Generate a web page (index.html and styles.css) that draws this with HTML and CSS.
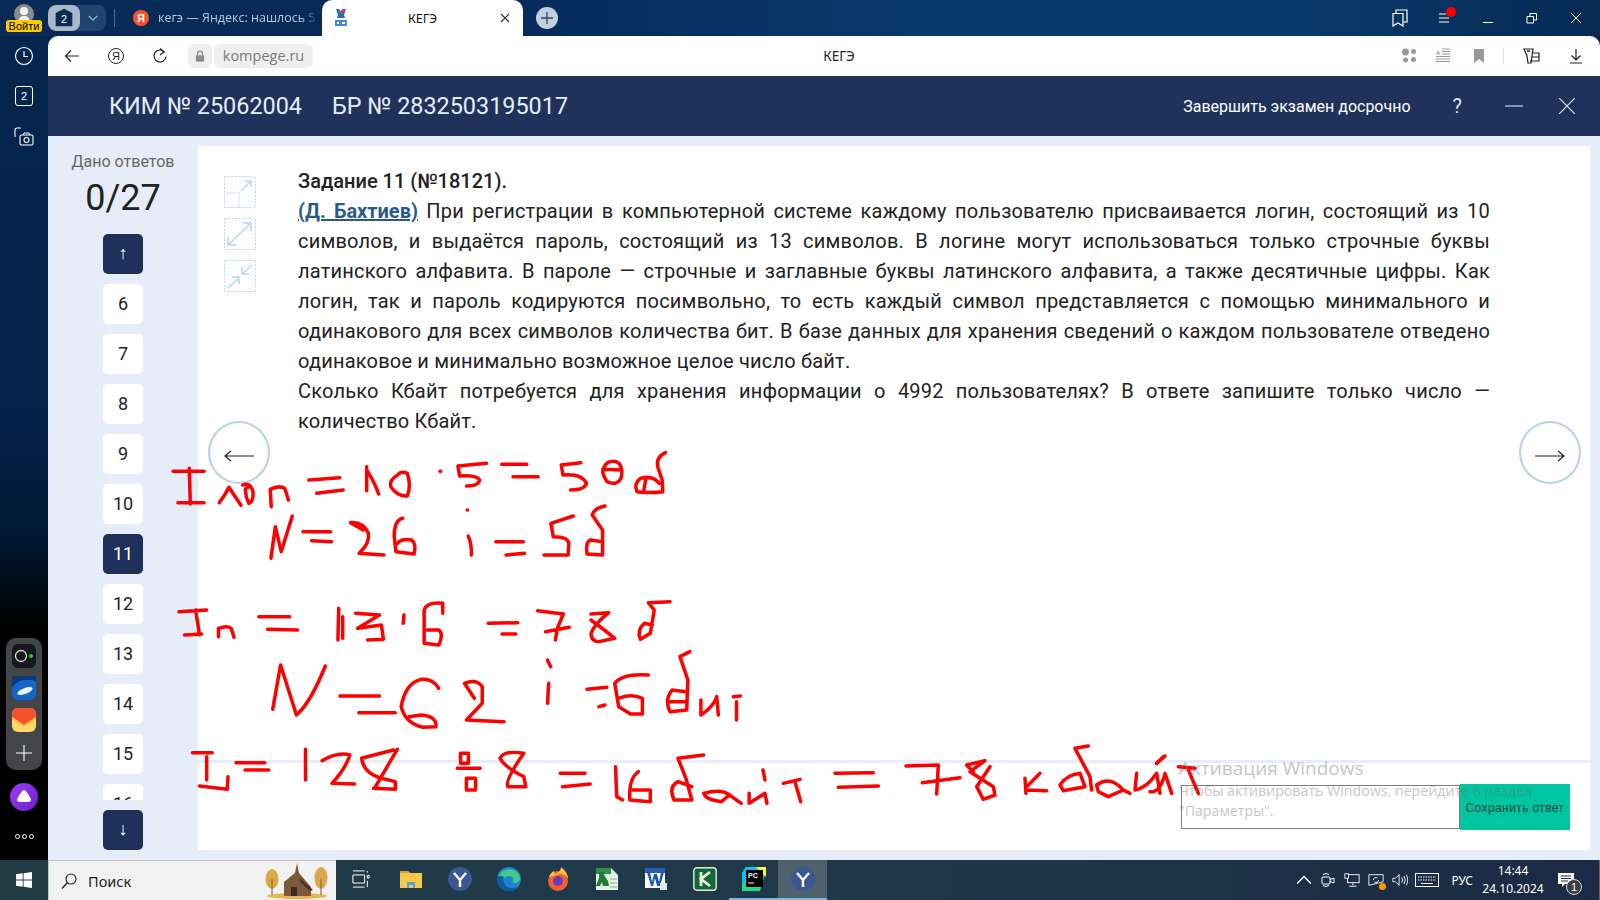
FILE: index.html
```html
<!DOCTYPE html>
<html lang="ru">
<head>
<meta charset="utf-8">
<title>КЕГЭ</title>
<link rel="stylesheet" href="styles.css">
</head>
<body>
<div class="window">
  <header class="tabbar">
    <div class="user">
      <svg class="avatar" viewBox="0 0 20 20"><circle cx="10" cy="10" r="10" fill="#8b8b8b"/><circle cx="10" cy="7" r="4" fill="#f2f2f2"/><path d="M4 18c1-5 3-6 6-6s5 1 6 6z" fill="#f2f2f2"/></svg>
      <span class="login">Войти</span>
    </div>
    <div class="tabgroup">
      <span class="tabgroup-count"><svg viewBox="0 0 24 24" class="house"><path d="M12 1 22 6v16H2V6z" fill="#0b2c55"/><text x="12" y="18" text-anchor="middle" class="house-num">2</text></svg></span>
      <span class="tabgroup-more"><svg viewBox="0 0 12 8" class="chev"><path d="M1 1l5 5 5-5" fill="none" stroke="#9db0c4" stroke-width="1.6"/></svg></span>
    </div>
    <span class="tab-sep"></span>
    <div class="tab">
      <span class="ya-fav">Я</span>
      <span class="tab-title">кегэ — Яндекс: нашлось 5</span>
    </div>
    <div class="tab-active">
      <svg class="fav" viewBox="0 0 14 20"><path d="M2 2h3l2 3 2-3h3l-2 6 1 3H3l1-3z" fill="#2a6fb5"/><path d="M7 3l3-1 1 3-3 2z" fill="#d8383a"/><path d="M1 13h12v6H1z" fill="#3f8ed0"/><path d="M3 15h2v2H3zM8 15h3v2H8z" fill="#fff"/></svg>
      <span class="active-title">КЕГЭ</span>
      <svg class="tab-x" viewBox="0 0 10 10"><path d="M1 1l8 8M9 1l-8 8" stroke="#333" stroke-width="1.1"/></svg>
    </div>
    <span class="newtab"><svg viewBox="0 0 12 12"><path d="M6 0v12M0 6h12" stroke="#33475f" stroke-width="1.3"/></svg></span>
    <div class="winctl">
      <svg class="wi" viewBox="0 0 16 18"><path d="M1 4.500h10v12.500l-5-3-5 3zM4 4.500V1h11v12h-4" fill="none" stroke="#fff" stroke-width="1.200"/></svg>
      <span class="menu-ic"><svg viewBox="0 0 12 12"><path d="M1 2h7M1 6h10M1 10h10" stroke="#fff" stroke-width="1"/></svg><i class="red-dot"></i></span>
      <svg class="wi" viewBox="0 0 12 12"><path d="M1 10.500h10" stroke="#fff"/></svg>
      <svg class="wi" viewBox="0 0 12 12"><path d="M1 4.500h6.500v6.500H1zM4 4.500V1.500h6.500V8H7.500" fill="none" stroke="#fff"/></svg>
      <svg class="wi" viewBox="0 0 12 12"><path d="M1 1l10 10M11 1 1 11" stroke="#fff"/></svg>
    </div>
  </header>

  <aside class="rail">
    <div class="rail-top">
      <svg class="rail-ic" viewBox="0 0 20 20"><circle cx="10" cy="10" r="8.500" fill="none" stroke="#fff" stroke-width="1.200"/><path d="M10 5v5.500h4" fill="none" stroke="#fff" stroke-width="1.200"/></svg>
      <span class="rail-tabs">2</span>
      <svg class="rail-ic" viewBox="0 0 20 20"><path d="M7 2H3a2 2 0 0 0-2 2v7" fill="none" stroke="#fff" stroke-width="1.100"/><rect x="6" y="9" width="13" height="10" rx="1.500" fill="none" stroke="#fff" stroke-width="1.100"/><circle cx="12.500" cy="14" r="2.500" fill="none" stroke="#fff" stroke-width="1.100"/><path d="M9 9l1-2h5l1 2" fill="none" stroke="#fff"/></svg>
    </div>
    <div class="rail-widgets">
      <svg class="app" viewBox="0 0 24 24"><rect width="24" height="24" rx="6" fill="#14191c"/><circle cx="9" cy="12" r="5.500" fill="none" stroke="#ddd" stroke-width="1.300"/><circle cx="19" cy="12" r="2" fill="#22d422"/></svg>
      <svg class="app" viewBox="0 0 24 24"><rect width="24" height="24" rx="6" fill="#1565c8"/><path d="M0 12C4 4 14 2 24 5V0H0z" fill="#0b3a78"/><ellipse cx="13" cy="15" rx="8" ry="3" fill="#eaf4ff" transform="rotate(-20 13 15)"/></svg>
      <svg class="app" viewBox="0 0 24 24"><rect width="24" height="24" rx="6" fill="#ffd86b"/><path d="M0 6a6 6 0 0 1 6-6h12a6 6 0 0 1 6 6v3l-12 8L0 9z" fill="#f4512c"/><path d="M0 9l12 8 12-8v3l-12 7-12-7z" fill="#ffc23d"/></svg>
      <svg class="widget-plus" viewBox="0 0 16 16"><path d="M8 0v16M0 8h16" stroke="#fff" stroke-width="1.100"/></svg>
    </div>
    <svg class="alice" viewBox="0 0 28 28"><defs><linearGradient id="al" x1="0" y1="0" x2="1" y2="1"><stop offset="0" stop-color="#a03cf0"/><stop offset="1" stop-color="#6a1fd0"/></linearGradient></defs><circle cx="14" cy="14" r="14" fill="url(#al)"/><path d="M14 7c2 0 7 8 7 10s-3 2-7 2-7 0-7-2 5-10 7-10z" fill="#fff"/></svg>
    <div class="rail-dots"><i></i><i></i><i></i></div>
  </aside>

  <main class="browser">
    <div class="toolbar">
      <svg class="tb" viewBox="0 0 16 16"><path d="M15 8H1.500M7 2.500 1.500 8 7 13.500" fill="none" stroke="#222" stroke-width="1.200"/></svg>
      <span class="ya-circle">Я</span>
      <svg class="tb" viewBox="0 0 16 16"><path d="M12.500 4A6 6 0 1 0 14 8.500" fill="none" stroke="#222" stroke-width="1.200"/><path d="M8 .5 12 4 8 7" fill="none" stroke="#222" stroke-width="1.200"/></svg>
      <span class="lock"><svg viewBox="0 0 12 14"><path d="M3 6V4a3 3 0 0 1 6 0v2" fill="none" stroke="#8c8c8c" stroke-width="1.500"/><rect x="1" y="6" width="10" height="8" rx="1.500" fill="#8c8c8c"/></svg></span>
      <span class="url">kompege.ru</span>
      <span class="page-title">КЕГЭ</span>
      <div class="tb-right">
        <svg class="tb" viewBox="0 0 16 16"><circle cx="4.500" cy="4" r="3.500" fill="#999"/><circle cx="12.500" cy="3.500" r="2.500" fill="#999"/><circle cx="4.500" cy="12" r="2.500" fill="#999"/><circle cx="12.500" cy="11.500" r="2.500" fill="#999"/></svg>
        <svg class="tb" viewBox="0 0 16 16"><path d="M7 1h8M7 3.500h8M7 6h8M1 8.500h14M1 11h14M1 13.500h14" stroke="#999"/><text x="1" y="6.500" class="reader-a">A</text></svg>
        <svg class="tb" viewBox="0 0 16 16"><path d="M3 1h10v14l-5-4-5 4z" fill="#999"/></svg>
        <span class="tb-sep"></span>
        <svg class="tb" viewBox="0 0 18 18"><path d="M2 2h9l-1 7-1 7H6L5 9z" fill="none" stroke="#222" stroke-width="1.200"/><path d="M5 4h3" stroke="#222" stroke-width="1.500"/><path d="M10 6h7v8H8" fill="none" stroke="#222" stroke-width="1.200"/><path d="M10 10h7" stroke="#222"/></svg>
        <svg class="tb" viewBox="0 0 16 16"><path d="M8 1v11M3.500 7.500 8 12l4.500-4.500M2 15h12" fill="none" stroke="#222" stroke-width="1.200"/></svg>
      </div>
    </div>

    <div class="exam-head">
      <span class="exam-id">КИМ № 25062004</span>
      <span class="exam-id">БР № 2832503195017</span>
      <span class="finish">Завершить экзамен досрочно</span>
      <span class="head-q">?</span>
      <svg class="head-min" viewBox="0 0 18 2"><path d="M0 1h18" stroke="#c9d5e8" stroke-width="1.200"/></svg>
      <svg class="head-x" viewBox="0 0 16 16"><path d="M0 0l16 16M16 0 0 16" stroke="#dbe4f2" stroke-width="1.200"/></svg>
    </div>

    <div class="exam-body">
      <nav class="nav-col">
        <div class="given">Дано ответов</div>
        <div class="count">0/27</div>
        <button class="q q-dark">↑</button>
        <div class="q-list">
          <button class="q">6</button>
          <button class="q">7</button>
          <button class="q">8</button>
          <button class="q">9</button>
          <button class="q">10</button>
          <button class="q q-dark">11</button>
          <button class="q">12</button>
          <button class="q">13</button>
          <button class="q">14</button>
          <button class="q">15</button>
          <button class="q">16</button>
        </div>
        <button class="q q-dark">↓</button>
      </nav>

      <section class="panel">
        <div class="task">
          <div class="tools">
            <svg class="tool" viewBox="0 0 32 32"><rect x=".5" y=".5" width="31" height="31" fill="none" stroke="#bcd4f5" stroke-dasharray="2 1.500"/><rect x=".5" y="17" width="14.500" height="14.500" fill="none" stroke="#d3e2f8"/><path d="M17 15 27 5M21 5h6v6" fill="none" stroke="#bcd4f5" stroke-width="1.500"/></svg>
            <svg class="tool" viewBox="0 0 32 32"><rect x=".5" y=".5" width="31" height="31" fill="none" stroke="#bcd4f5" stroke-dasharray="2 1.500"/><path d="M4 27 27 5M19 5h8v8M4 19v8h8" fill="none" stroke="#bcd4f5" stroke-width="1.500"/></svg>
            <svg class="tool" viewBox="0 0 32 32"><rect x=".5" y=".5" width="31" height="31" fill="none" stroke="#bcd4f5" stroke-dasharray="2 1.500"/><path d="M4 28 15 18M8 17h7v7M28 5 18 14M18 7v7h7" fill="none" stroke="#bcd4f5" stroke-width="1.500"/></svg>
          </div>
          <article class="text">
            <div class="task-title">Задание 11 (№18121).</div>
            <p class="para"><a class="author">(Д. Бахтиев)</a> При регистрации в компьютерной системе каждому пользователю присваивается логин, состоящий из 10 символов, и выдаётся пароль, состоящий из 13 символов. В логине могут использоваться только строчные буквы латинского алфавита. В пароле — строчные и заглавные буквы латинского алфавита, а также десятичные цифры. Как логин, так и пароль кодируются посимвольно, то есть каждый символ представляется с помощью минимального и одинакового для всех символов количества бит. В базе данных для хранения сведений о каждом пользователе отведено одинаковое и минимально возможное целое число байт.</p>
            <p class="para">Сколько Кбайт потребуется для хранения информации о 4992 пользователях? В ответе запишите только число — количество Кбайт.</p>
          </article>
        </div>
        <span class="pager pager-l"><svg viewBox="0 0 30 12"><path d="M30 6H1M7 1 1 6l6 5" fill="none" stroke="#222" stroke-width="1.200"/></svg></span>
        <span class="pager pager-r"><svg viewBox="0 0 30 12"><path d="M0 6h29M23 1l6 5-6 5" fill="none" stroke="#222" stroke-width="1.200"/></svg></span>
        <div class="answer">
          <div class="answer-input"></div>
          <button class="save">Сохранить ответ</button>
        </div>
      </section>
    </div>
  </main>

  <footer class="taskbar">
    <span class="start"><svg viewBox="0 0 16 16"><path d="M0 2.300 6.700 1.300V7.500H0zM7.600 1.200 16 0V7.500H7.600zM0 8.400H6.700V14.700L0 13.700zM7.600 8.400H16V16L7.600 14.800z" fill="#fff"/></svg></span>
    <div class="search">
      <svg class="mag" viewBox="0 0 16 16"><circle cx="10" cy="6" r="5" fill="none" stroke="#222" stroke-width="1.100"/><path d="M6.500 9.500 1 15.500" stroke="#222" stroke-width="1.300"/></svg>
      <span class="search-text">Поиск</span>
      <svg class="doodle" viewBox="0 0 66 36"><ellipse cx="33" cy="33" rx="30" ry="3" fill="#e8b64c"/><ellipse cx="8" cy="16" rx="6.500" ry="10" fill="#d9a94e"/><path d="M8 16v16" stroke="#7a5a30"/><ellipse cx="57" cy="15" rx="6.500" ry="11" fill="#d9a94e"/><path d="M57 16v16" stroke="#7a5a30"/><path d="M33 0l2 10 12 14v9H20V19l11-9z" fill="#7d5a3c"/><path d="M36 15l13 12-3 1-10-9z" fill="#4f3626"/><rect x="27" y="24" width="6" height="9" fill="#3d2a1d"/></svg>
    </div>
    <div class="pins">
      <span class="pin pin-view"><svg class="pin-ic" viewBox="0 0 20 20"><path d="M1 1h13M1 5.500h13v9H1zM1 19h13M17 1v2M17 6h2v3h-2zM17 12v7" fill="none" stroke="#fff" stroke-width="1.100"/></svg></span>
      <span class="pin"><svg class="pin-ic" viewBox="0 0 24 24"><path d="M1 4h8l2 2h12v15H1z" fill="#f5c84a"/><path d="M1 4h8l2 2H1z" fill="#d8a02c"/><path d="M8 15h8v6h-2v-3h-4v3H8z" fill="#4ba3e0"/></svg></span>
      <span class="pin"><svg class="pin-ic" viewBox="0 0 24 24"><circle cx="12" cy="12" r="12" fill="#3b5894"/><path d="M6 6l6 7 6-7M12 13v7" fill="none" stroke="#fff" stroke-width="2.400"/></svg></span>
      <span class="pin"><svg class="pin-ic" viewBox="0 0 24 24"><circle cx="12" cy="12" r="12" fill="#1d86c9"/><path d="M2 9C5 1 19-1 23 10c1 5-4 7-8 5 3-2 1-6-3-6-5 0-8 6-6 10C3 17 1 13 2 9z" fill="#43c98f"/><path d="M0 12c0 8 8 13 14 12 3-1 5-2 6-4-4 2-8 1-11-1C6 16 6 12 7 10 3 8 0 9 0 12z" fill="#0f5ba7"/></svg></span>
      <span class="pin"><svg class="pin-ic" viewBox="0 0 24 24"><circle cx="12" cy="14" r="10" fill="#f2622e"/><path d="M3 10C5 5 8 4 8 4c0 2 1 3 2 3 3-2 5-4 5-7 4 3 7 7 7 12-3-6-9-6-11-4z" fill="#ffbd3f"/><circle cx="12" cy="14" r="5" fill="#6a3bb8"/></svg></span>
      <span class="pin"><svg class="pin-ic" viewBox="0 0 24 24"><path d="M1 1h15l7 7v15H1z" fill="#e8f2e4"/><path d="M1 1h15v6H1z" fill="#2f8f4b"/><path d="M4 5h6l-1 3 4 6 1 5H8l-1-4-2 4H1l3-8z" fill="#1f7a3b"/><path d="M15 12h7M15 16h7M15 20h7" stroke="#7bb586"/></svg></span>
      <span class="pin"><svg class="pin-ic" viewBox="0 0 24 24"><path d="M1 1h20v20H1z" fill="#fff"/><path d="M1 1h20v5H1z" fill="#2a5db5"/><path d="M3 5h3l2 10 2-8h3l2 8 2-10h3l-4 14h-3l-2-8-2 8H7z" fill="#1d56b0"/><path d="M16 16h7v7h-7z" fill="#dfe8f4"/></svg></span>
      <span class="pin"><svg class="pin-ic" viewBox="0 0 24 24"><rect x=".8" y=".8" width="22.400" height="22.400" rx="3" fill="#0c6b3a" stroke="#efe8cf" stroke-width="1.400"/><path d="M8 5v14M17 5l-9 7 9 7" fill="none" stroke="#f2edd8" stroke-width="2.800"/></svg></span>
      <span class="pin"><svg class="pin-ic" viewBox="0 0 24 24"><path d="M4 0h20v4L18 24H0V6z" fill="#21d789"/><path d="M0 6 4 0h12L0 18z" fill="#07c3f2"/><path d="M14 0h10v10z" fill="#fcf84a"/><rect x="4" y="3" width="17" height="17" fill="#000"/><text x="6" y="11" class="pc-text">PC</text><path d="M6 16h6" stroke="#fff"/></svg></span>
      <span class="pin pin-on"><svg class="pin-ic" viewBox="0 0 24 24"><circle cx="12" cy="12" r="12" fill="#3b5894"/><path d="M6 6l6 7 6-7M12 13v7" fill="none" stroke="#fff" stroke-width="2.400"/></svg></span>
    </div>
    <div class="tray">
      <svg class="tr" viewBox="0 0 14 14"><path d="M1 10l6-6 6 6" fill="none" stroke="#fff" stroke-width="1.200"/></svg>
      <svg class="tr" viewBox="0 0 14 16"><path d="M2 2.500Q5 .5 8 2.500M2 13.500Q5 15.500 8 13.500" fill="none" stroke="#fff"/><rect x="1" y="5" width="8" height="7" rx="1" fill="none" stroke="#fff"/><path d="M9 7.500 13 6v5L9 9.500" fill="none" stroke="#fff"/></svg>
      <svg class="tr" viewBox="0 0 18 16"><rect x="4" y="2" width="13" height="9" fill="none" stroke="#fff"/><rect x="1" y="1" width="4" height="5" fill="#1c2b42" stroke="#fff"/><path d="M10 11v3M6 15h8" stroke="#fff"/></svg>
      <span class="tr-sync"><svg class="tr" viewBox="0 0 18 16"><path d="M1 2h16v8L1 14z" fill="none" stroke="#fff"/><path d="M6 8a3 3 0 0 1 5-2M12 8a3 3 0 0 1-5 2" fill="none" stroke="#fff"/></svg><i class="orange"></i></span>
      <svg class="tr" viewBox="0 0 18 16"><path d="M1 6h3l4-4v12l-4-4H1z" fill="none" stroke="#fff"/><path d="M11 5q2 3 0 6M13.500 3.500q3 4.500 0 9M16 2q3.500 6 0 12" fill="none" stroke="#fff"/></svg>
      <svg class="tr tr-kb" viewBox="0 0 24 14"><rect x=".5" y=".5" width="23" height="13" fill="none" stroke="#fff"/><path d="M3 4h18M3 7h18" stroke="#fff" stroke-dasharray="1.500 1"/><path d="M6 10.500h12" stroke="#fff"/></svg>
      <span class="lang">РУС</span>
      <div class="clock"><span>14:44</span><span>24.10.2024</span></div>
      <span class="notify"><svg viewBox="0 0 16 15"><path d="M0 0h16v11H7l-3 3v-3H0z" fill="#fff"/><path d="M3 3h10M3 5.500h10M3 8h7" stroke="#1c2b42"/></svg><i class="notify-badge">1</i></span>
    </div>
  </footer>

  <svg class="ink" viewBox="0 0 1600 900" aria-hidden="true">
    <g transform="translate(160 430) scale(.3444 .3333)">
      <path d="M38 124H128M85 115 88 222M52 218H128"/>
      <path d="M172 218Q190 195 200 172Q215 195 235 226"/>
      <path d="M240 165Q262 155 270 185Q272 215 258 220Q250 205 248 185Q245 170 262 170"/>
      <path d="M323 230 320 178Q345 165 362 175L373 210"/>
      <path d="M432 150 522 143M455 190 532 180"/>
      <path d="M600 110V182M600 120Q620 150 635 192"/>
      <path d="M690 135Q665 150 670 170Q690 200 718 198Q730 165 718 130Q700 122 690 135"/>
      <path d="M813 124h2"/>
      <path d="M948 100 865 108 870 138Q920 135 928 150Q925 168 890 168"/>
      <path d="M992 103H1065M1025 140H1098"/>
      <path d="M1222 98 1165 105 1170 135Q1225 130 1238 160Q1235 180 1192 180"/>
      <path d="M1290 110Q1278 125 1298 155Q1330 170 1340 140Q1345 105 1325 95Q1300 90 1290 110M1288 118 1338 120"/>
      <path d="M1468 68Q1440 80 1445 110L1458 150 1460 185Q1420 190 1385 185Q1375 160 1395 145Q1430 135 1450 160M1410 150 1405 180"/>
      <path d="M322 385 335 290 352 365 384 258"/>
      <path d="M415 305H495M440 332 498 335"/>
      <path d="M553 278Q590 275 605 310Q610 340 578 370L650 375M553 278 590 300"/>
      <path d="M705 265Q680 270 680 320L685 365 738 372Q745 340 730 330Q700 325 690 340"/>
      <path d="M892 240h1"/>
      <path d="M895 318Q905 340 904 375"/>
      <path d="M975 335H1055M1005 375 1058 370"/>
      <path d="M1200 258 1135 280 1142 320Q1185 320 1187 340L1185 375H1115"/>
      <path d="M1292 228Q1260 235 1255 255L1285 300V375L1240 372Q1235 335 1250 330L1285 335"/>
    </g>
    <g transform="translate(160 590) scale(.3954 .3333)">
      <path d="M48 65 118 60M90 60 100 135M62 135 105 132"/>
      <path d="M148 140V115Q170 105 180 115L187 142"/>
      <path d="M250 80H328M272 118 348 120"/>
      <path d="M452 55 450 150M462 80V145"/>
      <path d="M495 70 555 75 500 115 560 105 565 148 525 150"/>
      <path d="M617 75 615 100"/>
      <path d="M715 70V40Q675 35 668 60V160L705 165Q718 130 705 120H675"/>
      <path d="M830 100 905 98M865 132H900"/>
      <path d="M955 62 1020 72 1005 115 1000 150M975 125 1035 112"/>
      <path d="M1090 72 1135 68Q1100 100 1090 130Q1090 155 1110 155L1150 145Q1130 125 1090 90"/>
      <path d="M1290 35 1235 38 1250 60 1240 130 1215 148Q1205 120 1225 100L1245 105"/>
      <path d="M285 358 305 225 345 375Q380 340 418 228"/>
      <path d="M455 318H555M503 368H595"/>
      <path d="M705 295Q690 265 660 268Q620 280 610 350Q620 400 665 412L698 410Q700 378 660 375L630 380"/>
      <path d="M770 280Q800 265 815 290V340L775 390 870 395M770 280 795 325"/>
      <path d="M980 210 988 230M983 280 980 340"/>
      <path d="M1080 298 1130 292M1110 350 1125 345"/>
      <path d="M1235 255Q1170 250 1150 280L1160 350 1190 372H1220V325Q1190 310 1160 325"/>
      <path d="M1340 185 1315 200 1335 270 1332 360 1290 365Q1275 330 1295 300L1330 305M1285 335H1330"/>
      <path d="M1368 330V375Q1400 350 1408 320L1412 375"/>
      <path d="M1450 320 1468 318M1458 335V390"/>
      <path d="M82 488H132M118 500V570M100 588 170 598 172 560"/>
      <path d="M192 518H265M215 540H275"/>
      <path d="M368 478V570"/>
      <path d="M410 512Q450 485 480 495Q470 535 435 580L492 582"/>
      <path d="M600 478 545 590M590 480 510 505Q515 550 560 565L595 575V598L540 595"/>
      <path d="M760 490H780V520H760ZM752 535H810M775 565H798V600H775Z"/>
      <path d="M920 490Q870 480 860 505Q870 530 920 560L925 590H880Q870 575 920 490"/>
      <path d="M1012 550H1075M1018 590 1088 582"/>
      <path d="M1152 530 1155 620 1170 630"/>
      <path d="M1210 545Q1185 565 1188 630L1240 635V600H1190"/>
      <path d="M1375 495 1310 505 1330 565 1345 630H1300Q1285 590 1310 575L1345 590"/>
      <path d="M1375 610Q1420 595 1440 615L1420 635Q1380 630 1375 610M1440 615 1470 640"/>
      <path d="M1490 610V640L1530 610 1535 640M1525 540 1530 570"/>
    </g>
    <g transform="translate(760 730) scale(.3333)">
      <path d="M70 160 120 148M105 155 122 215"/>
      <path d="M225 130 340 128M235 172 355 168"/>
      <path d="M438 108 535 105 530 192M487 158 600 143"/>
      <path d="M620 105 675 92 630 125 700 170 705 195 670 208 650 170 690 110M620 105 640 125"/>
      <path d="M795 145 798 190M798 180 860 182M800 170 840 130"/>
      <path d="M900 165Q920 135 960 130L975 170 910 182Z"/>
      <path d="M985 48 945 55 990 140 995 180"/>
      <path d="M1010 165Q1050 135 1090 180L1045 200 1015 185ZM1090 180 1110 190"/>
      <path d="M1130 130 1125 180Q1160 175 1190 130L1200 190M1190 100 1215 78"/>
    </g>
    <g transform="translate(1150 740) scale(.3333)">
      <path d="M0 155Q30 160 45 100L65 160M40 50 20 70M85 80 135 85M115 90 145 160"/>
    </g>
  </svg>
  <div class="activation">
    <div class="act-title">Активация Windows</div>
    <div class="act-text">Чтобы активировать Windows, перейдите в раздел<br>"Параметры".</div>
  </div>
</div>
</body>
</html>
```

FILE: styles.css
```css
*{box-sizing:border-box}
html,body{margin:0;padding:0;height:100%;overflow:hidden}
body{font-family:Roboto,"Liberation Sans",sans-serif;color:#222}
.window{position:relative;width:1600px;height:900px;display:grid;grid-template-columns:48px 1552px;grid-template-rows:36px 824px 40px;background:#02244a}

.tabbar{grid-column:1/-1;display:flex;align-items:center;background:linear-gradient(90deg,#0a2b57 0,#06295a 30%,#0a3a6c 60%,#0a3a6c 80%,#062a54 100%);position:relative}
.user{position:relative;width:48px;height:36px;flex:none}
.avatar{position:absolute;left:14px;top:4px;width:20px;height:20px}
.login{position:absolute;left:6px;top:20px;width:36px;height:12px;border-radius:3px;background:#ffcc00;color:#000;font:11px/12px "Liberation Sans",sans-serif;text-align:center}
.tabgroup{display:flex;width:58px;height:26px;flex:none;border-radius:8px;overflow:hidden;background:#1f4470}
.tabgroup-count{width:32px;background:#a9b9c9;display:flex;align-items:center;justify-content:center;border-radius:8px}
.house{width:20px;height:20px}
.house-num{font:13px "Liberation Sans",sans-serif;fill:#fff}
.tabgroup-more{flex:1;display:flex;align-items:center;justify-content:center}
.chev{width:10px;height:7px}
.tab-sep{width:1px;height:18px;background:#4a6a8c;margin:0 0 0 8px;flex:none}
.tab{display:flex;align-items:center;width:207px;flex:none;padding-left:18px;overflow:hidden}
.ya-fav{width:16px;height:16px;border-radius:50%;background:#fc5230;color:#fff;font:bold 11px/16px "Liberation Sans",sans-serif;text-align:center;flex:none}
.tab-title{margin-left:9px;font:12.500px/16px "Open Sans",sans-serif;color:#b9c8d8;white-space:nowrap;-webkit-mask-image:linear-gradient(90deg,#000 92%,rgba(0,0,0,.2));mask-image:linear-gradient(90deg,#000 92%,rgba(0,0,0,.2))}
.tab-active{position:relative;width:201px;height:36px;flex:none;background:#fff;border-radius:10px 10px 0 0;display:flex;align-items:center}
.fav{position:absolute;left:12px;top:7px;width:14px;height:20px}
.active-title{width:100%;text-align:center;font:12.500px "Noto Sans",sans-serif;color:#111}
.tab-x{position:absolute;right:13px;top:13px;width:10px;height:10px}
.newtab{width:22px;height:22px;margin-left:13px;border-radius:50%;background:#c2cfdc;display:flex;align-items:center;justify-content:center;flex:none}
.newtab svg{width:12px;height:12px}
.winctl{margin-left:auto;display:flex;align-items:center;height:36px}
.winctl>*{margin-left:32px}
.winctl>:last-child{margin-right:18px}
.wi{width:12px;height:12px;display:block}
.winctl>.wi:first-child{width:16px;height:18px}
.menu-ic{position:relative;width:12px;height:12px;display:block;margin-left:30px}
.menu-ic svg{width:12px;height:12px;display:block}
.red-dot{position:absolute;left:8px;top:-5px;width:10px;height:10px;border-radius:50%;background:#f00}

.rail{display:flex;flex-direction:column;align-items:center;background:linear-gradient(180deg,#04264e 0,#02234a 45%,#011a36 60%,#000 72%);padding:10px 0 21px}
.rail-top{display:flex;flex-direction:column;align-items:center;gap:20px}
.rail-ic{width:20px;height:20px;display:block}
.rail-tabs{width:18px;height:20px;border:1px solid #fff;border-radius:3px;color:#fff;font:11px/18px "Liberation Sans",sans-serif;text-align:center}
.rail-widgets{margin-top:auto;width:36px;height:132px;border-radius:10px;background:#444548;display:flex;flex-direction:column;align-items:center;padding-top:6px;gap:8px}
.app{width:24px;height:24px;display:block;flex:none}
.widget-plus{width:16px;height:16px;margin-top:5px}
.alice{width:28px;height:28px;margin-top:13px;flex:none}
.rail-dots{display:flex;gap:2px;margin-top:23px}
.rail-dots i{width:5px;height:5px;border:1px solid #fff;border-radius:50%}

.browser{display:flex;flex-direction:column;min-width:0}
.toolbar{position:relative;height:40px;flex:none;background:#fff;border-radius:10px 10px 0 0;display:flex;align-items:center;padding-left:16px}
.tb{width:16px;height:16px;display:block;flex:none}
.ya-circle{width:16px;height:16px;margin-left:28px;border:1.200px solid #222;border-radius:50%;font:11px/14px "Liberation Sans",sans-serif;text-align:center;flex:none}
.toolbar>.tb:nth-child(3){margin-left:28px}
.lock{width:24px;height:24px;margin-left:20px;border-radius:6px;background:#efefef;display:flex;align-items:center;justify-content:center;flex:none}
.lock svg{width:10px;height:12px}
.url{margin-left:2px;height:24px;width:99px;border-radius:6px;background:#efefef;color:#7a7a7a;font:14.500px/24px "Open Sans",sans-serif;text-align:center;flex:none}
.page-title{position:absolute;left:743px;width:96px;text-align:center;font:13.500px "Noto Sans",sans-serif;color:#222}
.tb-right{margin-left:auto;display:flex;align-items:center;padding-right:16px}
.tb-right>*{margin-left:20px}
.tb-right>:nth-child(2){margin-left:18px}
.tb-sep{width:1px;height:16px;background:#ddd;margin-left:16px}
.tb-right>:nth-child(5){margin-left:18px;width:18px;height:18px}
.tb-right>:nth-child(6){margin-left:28px}
.reader-a{font:bold 6px "Liberation Sans",sans-serif;fill:#999}

.exam-head{height:60px;flex:none;background:#20325a;display:flex;align-items:center;padding-left:61px}
.exam-id{font-size:23.400px;color:#e4eefa;margin-right:30px;white-space:nowrap}
.finish{margin-left:auto;font-size:16px;color:#fff;white-space:nowrap}
.head-q{margin-left:42px;font-size:20px;color:#dbe4f2}
.head-min{width:18px;height:2px;margin-left:43px}
.head-x{width:16px;height:16px;margin-left:36px;margin-right:25px}

.exam-body{flex:1;min-height:0;display:flex;background:#e6ecf8;padding:10px 10px 10px 0}
.nav-col{width:150px;flex:none;display:flex;flex-direction:column;align-items:center;margin-top:-10px;padding-top:15px}
.given{font-size:16px;line-height:22px;color:#666}
.count{font-size:36px;line-height:50px;color:#222;margin-bottom:11px}
.q{width:40px;height:40px;flex:none;border:0;border-radius:5px;background:#fff;color:#222;font:18px Roboto,sans-serif;padding:0 0 2px}
.q-dark{background:#1f315a;color:#fff}
.q-list{display:flex;flex-direction:column;gap:10px;height:516px;overflow:hidden;margin:10px 0}
.panel{position:relative;flex:1;background:#fff;display:flex;flex-direction:column;min-width:0}
.task{flex:1;display:flex;padding:20px 100px 0 26px}
.tools{width:32px;flex:none;display:flex;flex-direction:column;gap:10px;padding-top:10px}
.tool{width:32px;height:32px;display:block}
.text{margin-left:42px;font-size:20px;line-height:30px;color:#222;flex:1;min-width:0}
.task-title{font-weight:500}
.para{margin:0;text-align:justify;letter-spacing:.2px}
.author{color:#2a5a8c;font-weight:700;text-decoration:underline;letter-spacing:0}
.pager{position:absolute;top:275px;width:62px;height:63px;border:2px solid #b6cff2;border-radius:50%;display:flex;align-items:center;justify-content:center;background:transparent}
.pager svg{width:30px;height:12px;margin-top:6px}
.pager-l{left:10px}
.pager-r{right:9px}
.answer{height:90px;flex:none;border-top:3px solid #e6ecf8;display:flex;justify-content:flex-end;padding:21px 20px 0 0}
.answer-input{width:279px;height:44px;margin-top:1px;border:1px solid #808080}
.save{width:110px;height:46px;border:0;background:#00c5a1;color:#17403c;font:12px "Liberation Sans",sans-serif;letter-spacing:.4px;padding:2px 0 0}

.taskbar{grid-column:1/-1;display:flex;align-items:stretch;background:linear-gradient(90deg,#213b45 0,#20394a 50%,#1b2a45 100%)}
.start{width:48px;flex:none;display:flex;align-items:center;justify-content:center}
.start svg{width:16px;height:16px}
.search{position:relative;width:288px;flex:none;background:#f1f1f1;border-top:1px solid #c4c4c4;border-left:1px solid #c4c4c4;display:flex;align-items:center;padding-left:12px}
.mag{width:16px;height:16px}
.search-text{margin-left:11px;font:14.500px "Noto Sans",sans-serif;color:#222}
.doodle{position:absolute;right:6px;top:2px;width:66px;height:36px}
.pins{display:flex;padding-left:0}
.pin{width:49px;display:flex;align-items:center;justify-content:center;border-bottom:2px solid transparent}
.pin-view{width:50px}
.pin:nth-child(9){border-bottom-color:#76b9ed}
.pin-on{background:#4f626c;border-bottom-color:#76b9ed}
.pin-ic{width:24px;height:24px;display:block}
.pin-view .pin-ic{width:18px;height:18px}
.pc-text{font:bold 7px "Liberation Sans",sans-serif;fill:#fff}
.tray{margin-left:auto;display:flex;align-items:center;padding-right:5px;border-right:1px solid #666}
.tr{width:16px;height:16px;display:block;margin-left:8px;flex:none}
.tr-sync{position:relative;display:block;flex:none}
.orange{position:absolute;right:-2px;bottom:-2px;width:7px;height:7px;border-radius:50%;background:#ff9500}
.tr-kb{width:24px;height:14px;margin-left:7px}
.lang{margin-left:12px;font:12px "Noto Sans",sans-serif;color:#fff}
.clock{display:flex;flex-direction:column;align-items:center;width:60px;margin-left:10px;font:12px/18px "Noto Sans",sans-serif;color:#fff}
.notify{position:relative;width:16px;height:15px;margin-left:15px;margin-right:20px}
.notify svg{width:16px;height:15px;display:block}
.notify-badge{position:absolute;left:8px;top:6px;width:16px;height:16px;border-radius:50%;background:#3a3f48;border:1px solid #d9d9d9;color:#fff;font:normal 11px/14px "Liberation Sans",sans-serif;text-align:center}

.ink{position:absolute;left:0;top:0;width:1600px;height:900px;pointer-events:none}
.ink path{fill:none;stroke:#f00;stroke-width:3.500px;stroke-linecap:round;stroke-linejoin:round;vector-effect:non-scaling-stroke}
.activation{position:absolute;left:1179px;top:755px;pointer-events:none;font-family:"Open Sans",sans-serif;color:rgba(110,110,110,.42);white-space:nowrap}
.act-title{font-size:19px;line-height:26px}
.act-text{font-size:14.200px;line-height:20px}
```
